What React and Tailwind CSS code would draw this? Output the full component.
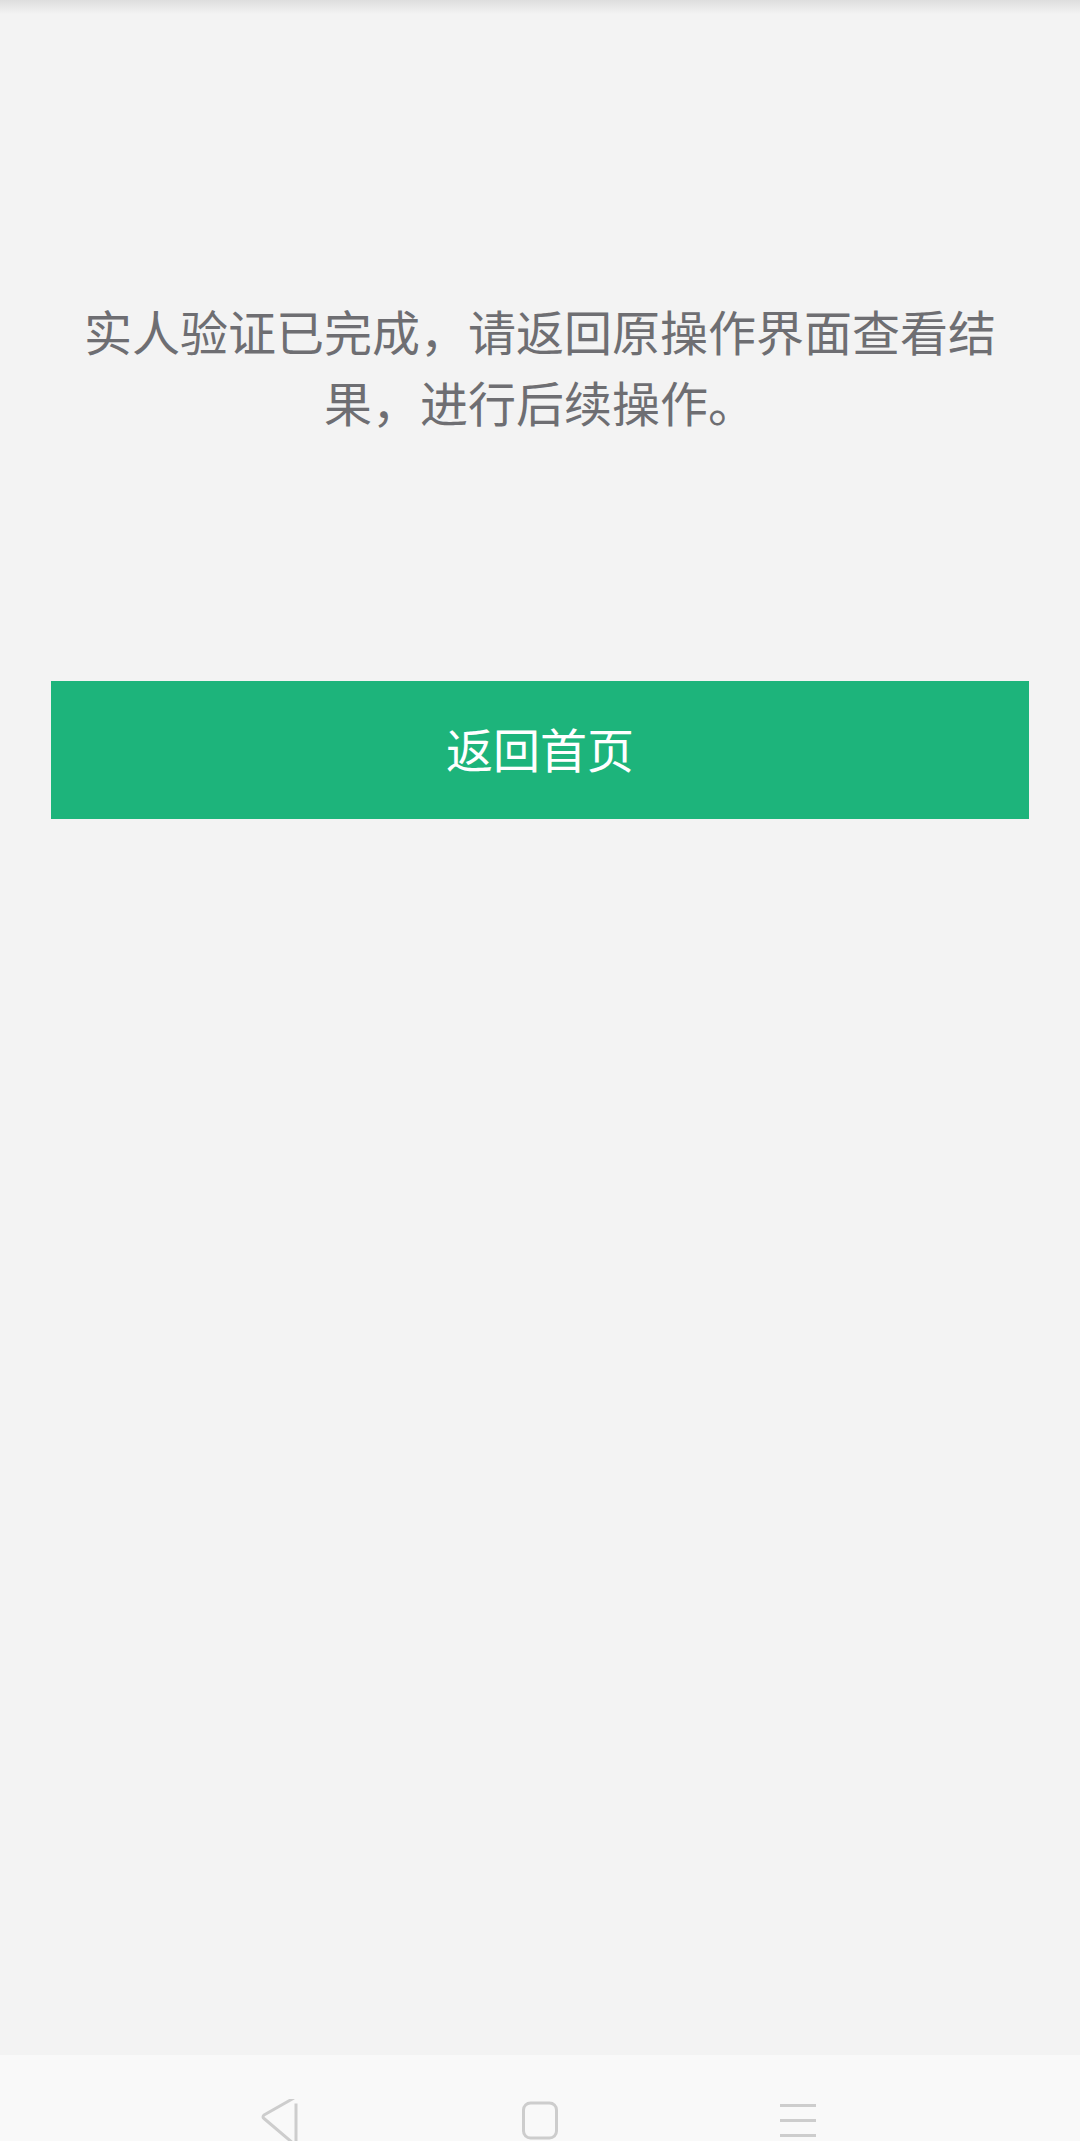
export default function App() {
  return (
    <div
      className="relative flex h-[2141px] w-[1080px] flex-col overflow-hidden bg-[#f3f3f3]"
      style={{ fontFamily: '"Noto Sans CJK SC", "Noto Sans", sans-serif' }}
    >
      <div className="pointer-events-none absolute left-0 right-0 top-0 h-[14px] bg-gradient-to-b from-[#dedede] to-[#f3f3f3]" />
      <main className="flex flex-1 flex-col">
        <p className="mt-[295px] px-[64px] text-center text-[48px] leading-[71px] text-[#6e6e72]">
          实人验证已完成，请返回原操作界面查看结果，进行后续操作。
        </p>
        <div className="mt-[244px] px-[51px]">
          <button className="flex h-[138px] w-full items-center justify-center bg-[#1db47b] pb-[4px] text-[47px] text-white">
            返回首页
          </button>
        </div>
      </main>
      <nav className="relative h-[86px] bg-[#f9f9f9]">
        <svg className="absolute left-[258px] top-[44px]" width="44" height="46" viewBox="0 0 44 46" fill="none">
          <path
            d="M38 4.5 L38 44.5 Q38 47 36 45 L6 19.5 Q4 18 6 16 L36 -1"
            stroke="#cdcdcd"
            strokeWidth="3"
            strokeLinejoin="round"
            fill="none"
          />
        </svg>
        <svg className="absolute left-[520px] top-[46px]" width="40" height="40" viewBox="0 0 40 40" fill="none">
          <rect x="3.5" y="2" width="33" height="35" rx="7" stroke="#cdcdcd" strokeWidth="3" />
        </svg>
        <div className="absolute left-[780px] top-[49px] flex w-[36px] flex-col gap-[12px]">
          <div className="h-[3px] w-full bg-[#cdcdcd]" />
          <div className="h-[3px] w-full bg-[#cdcdcd]" />
          <div className="h-[3px] w-full bg-[#cdcdcd]" />
        </div>
      </nav>
    </div>
  );
}
